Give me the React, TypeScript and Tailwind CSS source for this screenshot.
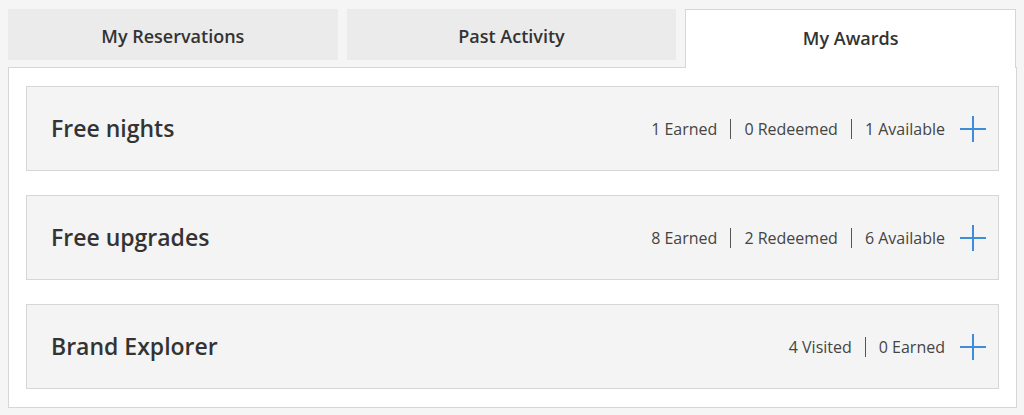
import { Fragment } from "react";

const tabs = ["My Reservations", "Past Activity", "My Awards"];

const awards = [
  { title: "Free nights", stats: ["1 Earned", "0 Redeemed", "1 Available"] },
  { title: "Free upgrades", stats: ["8 Earned", "2 Redeemed", "6 Available"] },
  { title: "Brand Explorer", stats: ["4 Visited", "0 Earned"] },
];

function Plus() {
  return (
    <svg width="26" height="26" viewBox="0 0 26 26" className="ml-[15px] mr-[12px]">
      <path d="M13 0V26M0 13H26" stroke="#3d8ddb" strokeWidth="2" />
    </svg>
  );
}

export default function App() {
  const active = 2;
  return (
    <div
      className="w-[1024px] h-[415px] bg-[#f5f5f5] pt-[9px] px-[8px] text-[#333]"
      style={{ fontFamily: '"Open Sans", sans-serif' }}
    >
      <div className="flex">
        {tabs.map((t, i) =>
          i === active ? (
            <div
              key={t}
              className="w-[331px] h-[59px] bg-white border border-b-0 border-[#d6d6d6] flex items-center justify-center text-[18px] font-semibold -mb-px relative z-10 pb-[1px]"
            >
              {t}
            </div>
          ) : (
            <div
              key={t}
              className="w-[330px] h-[51px] bg-[#ebebeb] mr-[9px] flex items-center justify-center text-[18px] font-semibold pt-[3px]"
            >
              {t}
            </div>
          )
        )}
      </div>
      <div className="w-[1009px] bg-white border border-[#d6d6d6] pt-[18px] pb-[18px] px-[17px] flex flex-col gap-[24px]">
        {awards.map((a) => (
          <div
            key={a.title}
            className="h-[85px] bg-[#f4f4f4] border border-[#d6d6d6] flex items-center pl-[24px]"
          >
            <div className="text-[23px] font-semibold flex-1">{a.title}</div>
            <div className="flex items-center text-[16px] text-[#444]">
              {a.stats.map((s, i) => (
                <Fragment key={s}>
                  {i > 0 && <div className="w-px h-[20px] bg-[#555] mx-[13px]" />}
                  <span>{s}</span>
                </Fragment>
              ))}
            </div>
            <Plus />
          </div>
        ))}
      </div>
    </div>
  );
}
